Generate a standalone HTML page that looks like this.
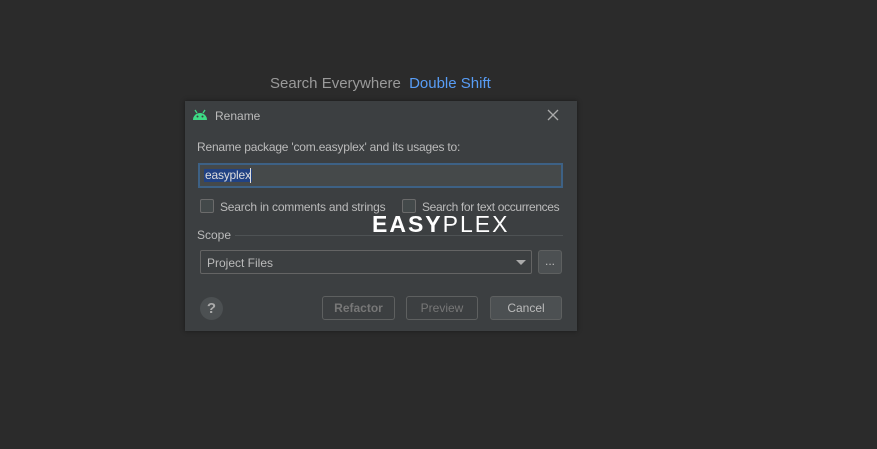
<!DOCTYPE html>
<html><head><style>
*{box-sizing:border-box}
body{margin:0;width:877px;height:449px;background:#2b2b2b;font-family:"Liberation Sans",sans-serif;font-size:12px;color:#bbbbbb;position:relative;overflow:hidden}
.a{position:absolute}
.dlg{left:185px;top:101px;width:392px;height:230px;background:#3c3f41;box-shadow:0 0 4px #1a1a1a}
.cb{width:14px;height:14px;border:1px solid #6b6b6b;background:#43494a;border-radius:2px}
.btn{height:24px;border:1px solid #5e6060;border-radius:3px;text-align:center;line-height:22px;color:#777}
.t{letter-spacing:-0.2px}
</style></head><body>
<div class="a" style="left:270px;top:75px;font-size:15px;color:#9a9a9a">Search Everywhere <span style="color:#589df6;margin-left:4px">Double Shift</span></div>
<div class="a dlg">
 <svg class="a" style="left:7px;top:8px" width="16" height="12" viewBox="0 0 16 12"><path d="M1 11 A7 7 0 0 1 15 11Z" fill="#3ddc84"/><path d="M3 1 L5 4 M13 1 L11 4" stroke="#3ddc84" stroke-width="1.3"/><circle cx="5.5" cy="7.5" r="1" fill="#3c3f41"/><circle cx="10.5" cy="7.5" r="1" fill="#3c3f41"/></svg>
 <div class="a" style="left:30px;top:8px">Rename</div>
 <svg class="a" style="left:362px;top:8px" width="12" height="12"><path d="M1 1L11 11M11 1L1 11" stroke="#aaa" stroke-width="1.3"/></svg>
 <div class="a t" style="left:12px;top:39px">Rename package 'com.easyplex' and its usages to:</div>
 <div class="a" style="left:13px;top:62px;width:365px;height:25px;border:2px solid #3d6185;background:#45494a"></div>
 <div class="a t" style="left:19px;top:68px;background:#214283;color:#ddd;padding:0 1px;line-height:13px">easyplex</div>
 <div class="a" style="left:65px;top:67px;width:1px;height:15px;background:#ddd"></div>
 <div class="a cb" style="left:15px;top:98px"></div>
 <div class="a t" style="left:35px;top:99px">Search in comments and strings</div>
 <div class="a cb" style="left:217px;top:98px"></div>
 <div class="a t" style="left:237px;top:99px;letter-spacing:-0.35px">Search for text occurrences</div>
 <div class="a" style="left:187px;top:110px;font-size:23px;font-weight:bold;color:#fff;letter-spacing:2px">EASY<span style="font-weight:normal">PLEX</span></div>
 <div class="a" style="left:12px;top:127px">Scope</div>
 <div class="a" style="left:50px;top:134px;width:328px;height:1px;background:#4e5254"></div>
 <div class="a" style="left:15px;top:149px;width:332px;height:24px;border:1px solid #646464;border-radius:2px;background:#3c3f41;padding:5px 6px;color:#bbb">Project Files</div>
 <div class="a" style="left:331px;top:159px;border:5px solid transparent;border-top:5px solid #aaa;border-bottom:0"></div>
 <div class="a" style="left:353px;top:149px;width:24px;height:24px;border:1px solid #5e6060;border-radius:3px;background:#4c5052;text-align:center;line-height:20px">...</div>
 <div class="a" style="left:15px;top:196px;width:23px;height:23px;border-radius:50%;background:#4c5052;color:#aaa;text-align:center;line-height:23px;font-size:15px;font-weight:bold">?</div>
 <div class="a btn" style="left:137px;top:195px;width:73px;font-weight:bold">Refactor</div>
 <div class="a btn" style="left:221px;top:195px;width:72px">Preview</div>
 <div class="a btn" style="left:305px;top:195px;width:72px;background:#4c5052;color:#bbb">Cancel</div>
</div>
</body></html>
